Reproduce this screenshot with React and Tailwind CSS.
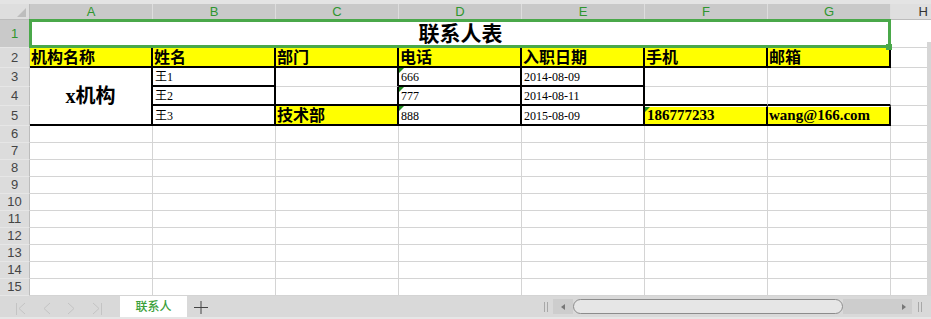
// Spreadsheet view: 联系人表 sheet with a merged title, bordered table and sheet tab bar
const serif = "font-['Liberation_Serif','Noto_Sans_CJK_SC',serif]";
const sans = "font-['Liberation_Sans','Noto_Sans_CJK_SC',sans-serif]";
const grid = "border-r border-b border-[#d4d4d4]";
const thick = "border-r-2 border-b-2 border-black";
const yellow = "bg-[#ffff00]";
const cols = ["A", "B", "C", "D", "E", "F", "G"];

function Flag() {
  return (
    <span className="absolute left-0 top-0 h-0 w-0 border-t-[5px] border-r-[5px] border-t-[#1e8c1e] border-r-transparent" />
  );
}

function Cell({ className = "", children }) {
  return (
    <div className={`relative flex min-w-0 items-end overflow-hidden whitespace-nowrap ${className}`}>
      {children}
    </div>
  );
}

function Head({ children }) {
  return (
    <span className={`${serif} pl-[1px] text-[16px] font-bold leading-[17px] text-black`}>{children}</span>
  );
}

function Small({ children }) {
  return <span className={`${serif} pl-[2px] pb-[1px] text-[12px] leading-[14px] text-black`}>{children}</span>;
}

function RowHead({ n, active = false }) {
  return (
    <div
      className={`flex items-center justify-center border-r border-b border-r-[#bcbcbc] border-b-[#e6e6e6] text-[13px] ${sans} ${
        active ? "bg-[#c9c9c9] text-[#2f962f]" : "bg-[#dcdcdc] text-[#444]"
      }`}
    >
      {n}
    </div>
  );
}

export default function App() {
  const empty = [6, 7, 8, 9, 10, 11, 12, 13, 14, 15];

  return (
    <div className="flex h-[319px] w-[931px] flex-col overflow-hidden bg-white">
      <div className="h-[4px] bg-[#e4e4e4]" />

      <div className="grid grid-cols-[30px_repeat(7,123px)_36px_4px] grid-rows-[16px_28px_20px_19px_19px_20px_repeat(10,17px)]">
        {/* column headers */}
        <div className="relative border-r border-b border-r-[#bcbcbc] border-b-[#bcbcbc] bg-[#dedede]">
          <svg width="29" height="15" className="absolute left-0 top-0">
            <polygon points="26,4 26,13 17,13" fill="#bdbdbd" />
          </svg>
        </div>
        {cols.map((c) => (
          <div
            key={c}
            className={`flex items-center justify-center border-r border-b border-r-[#dddddd] border-b-[#bcbcbc] bg-[#c9c9c9] text-[13px] text-[#2f962f] ${sans}`}
          >
            {c}
          </div>
        ))}
        <div className={`col-span-2 flex items-center justify-end border-b border-b-[#bcbcbc] bg-[#dfdfdf] pr-[3px] text-[13px] text-[#333] ${sans}`}>
          H
        </div>

        {/* row 1 */}
        <RowHead n="1" active />
        <div className="relative col-span-7 flex items-center justify-center border-b border-[#d4d4d4] bg-white pt-[2px]">
          <span className={`${serif} text-[21px] font-bold leading-none text-black`}>联系人表</span>
          <div className="pointer-events-none absolute -left-px -top-px right-0 -bottom-px z-10 border-[3px] border-[#4aa84a]" />
          <div className="absolute -right-px -bottom-[3px] z-10 h-[6px] w-[6px] bg-[#4aa84a]" />
        </div>
        <div className="border-b border-[#d4d4d4]" />
        <div className="row-span-15 flex flex-col">
          <div className="h-[22px] bg-white" />
          <div className="flex-1 bg-[#d6d6d6]" />
        </div>

        {/* row 2 */}
        <RowHead n="2" />
        <Cell className={`${yellow} ${thick}`}><Head>机构名称</Head></Cell>
        <Cell className={`${yellow} ${thick}`}><Head>姓名</Head></Cell>
        <Cell className={`${yellow} ${thick}`}><Head>部门</Head></Cell>
        <Cell className={`${yellow} ${thick}`}><Head>电话</Head></Cell>
        <Cell className={`${yellow} ${thick}`}><Head>入职日期</Head></Cell>
        <Cell className={`${yellow} ${thick}`}><Head>手机</Head></Cell>
        <Cell className={`${yellow} ${thick}`}><Head>邮箱</Head></Cell>
        <div className="border-b border-[#d4d4d4]" />

        {/* row 3 */}
        <RowHead n="3" />
        <div className={`row-span-3 flex items-center justify-center ${thick}`}>
          <span className={`${serif} text-[20px] font-bold leading-none text-black`}>x机构</span>
        </div>
        <Cell className={thick}><Small>王1</Small></Cell>
        <Cell className="border-r-2 border-b border-r-black border-b-[#d4d4d4]" />
        <Cell className={thick}><Flag /><Small>666</Small></Cell>
        <Cell className={thick}><Small>2014-08-09</Small></Cell>
        <Cell className={grid} />
        <Cell className={grid} />
        <div className="border-b border-[#d4d4d4]" />

        {/* row 4 */}
        <RowHead n="4" />
        <Cell className={thick}><Small>王2</Small></Cell>
        <Cell className={thick} />
        <Cell className={thick}><Flag /><Small>777</Small></Cell>
        <Cell className={thick}><Small>2014-08-11</Small></Cell>
        <Cell className="border-r border-b-2 border-r-[#d4d4d4] border-b-black" />
        <Cell className="border-r border-b-2 border-r-[#d4d4d4] border-b-black" />
        <div className="border-b border-[#d4d4d4]" />

        {/* row 5 */}
        <RowHead n="5" />
        <Cell className={thick}><Small>王3</Small></Cell>
        <Cell className={`${yellow} ${thick}`}><Head>技术部</Head></Cell>
        <Cell className={thick}><Flag /><Small>888</Small></Cell>
        <Cell className={thick}><Small>2015-08-09</Small></Cell>
        <Cell className={`${yellow} ${thick} border-t border-t-white`}>
          <Flag />
          <span className={`${serif} pl-[2px] text-[15px] font-bold leading-[17px] text-black`}>186777233</span>
        </Cell>
        <Cell className={`${yellow} ${thick} border-t border-t-white`}>
          <span className={`${serif} pl-[1px] text-[15px] font-bold leading-[17px] text-black`}>wang@166.com</span>
        </Cell>
        <div className="border-b border-[#d4d4d4]" />

        {/* empty rows */}
        {empty.map((n) => (
          <div key={n} className="contents">
            <RowHead n={String(n)} />
            {cols.map((c) => (
              <div key={c} className={grid} />
            ))}
            <div className="border-b border-[#d4d4d4]" />
          </div>
        ))}
      </div>

      {/* sheet tab bar */}
      <div className="flex h-[21px] items-center bg-[#d9d9d9]">
        <svg width="120" height="21" className="shrink-0" fill="none" stroke="#c4c4c4" strokeWidth="1">
          <path d="M16.5 7v12M25 7l-6 5.5 6 5.5" />
          <path d="M50 7l-6 5.5 6 5.5" />
          <path d="M68 7l6 5.5-6 5.5" />
          <path d="M93 7l6 5.5-6 5.5M101.5 7v12" />
        </svg>
        <div className={`flex h-full w-[67px] shrink-0 items-center justify-center bg-white text-[12px] font-medium text-[#3a9f3a] ${sans}`}>
          联系人
        </div>
        <svg width="26" height="21" className="shrink-0" fill="none" stroke="#444" strokeWidth="1">
          <path d="M7 11.5h14M14 5v13" />
        </svg>
        <div className="ml-auto flex items-center">
          <svg width="13" height="21" fill="none" stroke="#a8a8a8" strokeWidth="1">
            <path d="M4.5 6v10M7.5 6v10" />
          </svg>
          <div className="flex h-[15px] w-[20px] items-center justify-center bg-[#cdcdcd]">
            <svg width="4" height="6">
              <polygon points="4,0 4,6 0,3" fill="#777" />
            </svg>
          </div>
          <div className="h-[15px] w-[270px] rounded-full border border-[#8c8c8c] bg-[#e6e6e6]" />
          <div className="flex h-[15px] w-[69px] items-center justify-end bg-[#cdcdcd] pr-[6px]">
            <svg width="4" height="6">
              <polygon points="0,0 0,6 4,3" fill="#777" />
            </svg>
          </div>
          <svg width="19" height="21" fill="none" stroke="#a8a8a8" strokeWidth="1">
            <path d="M6.5 6v10M9.5 6v10" />
          </svg>
        </div>
      </div>
      <div className="h-[2px] bg-[#e6e6e6]" />
    </div>
  );
}
